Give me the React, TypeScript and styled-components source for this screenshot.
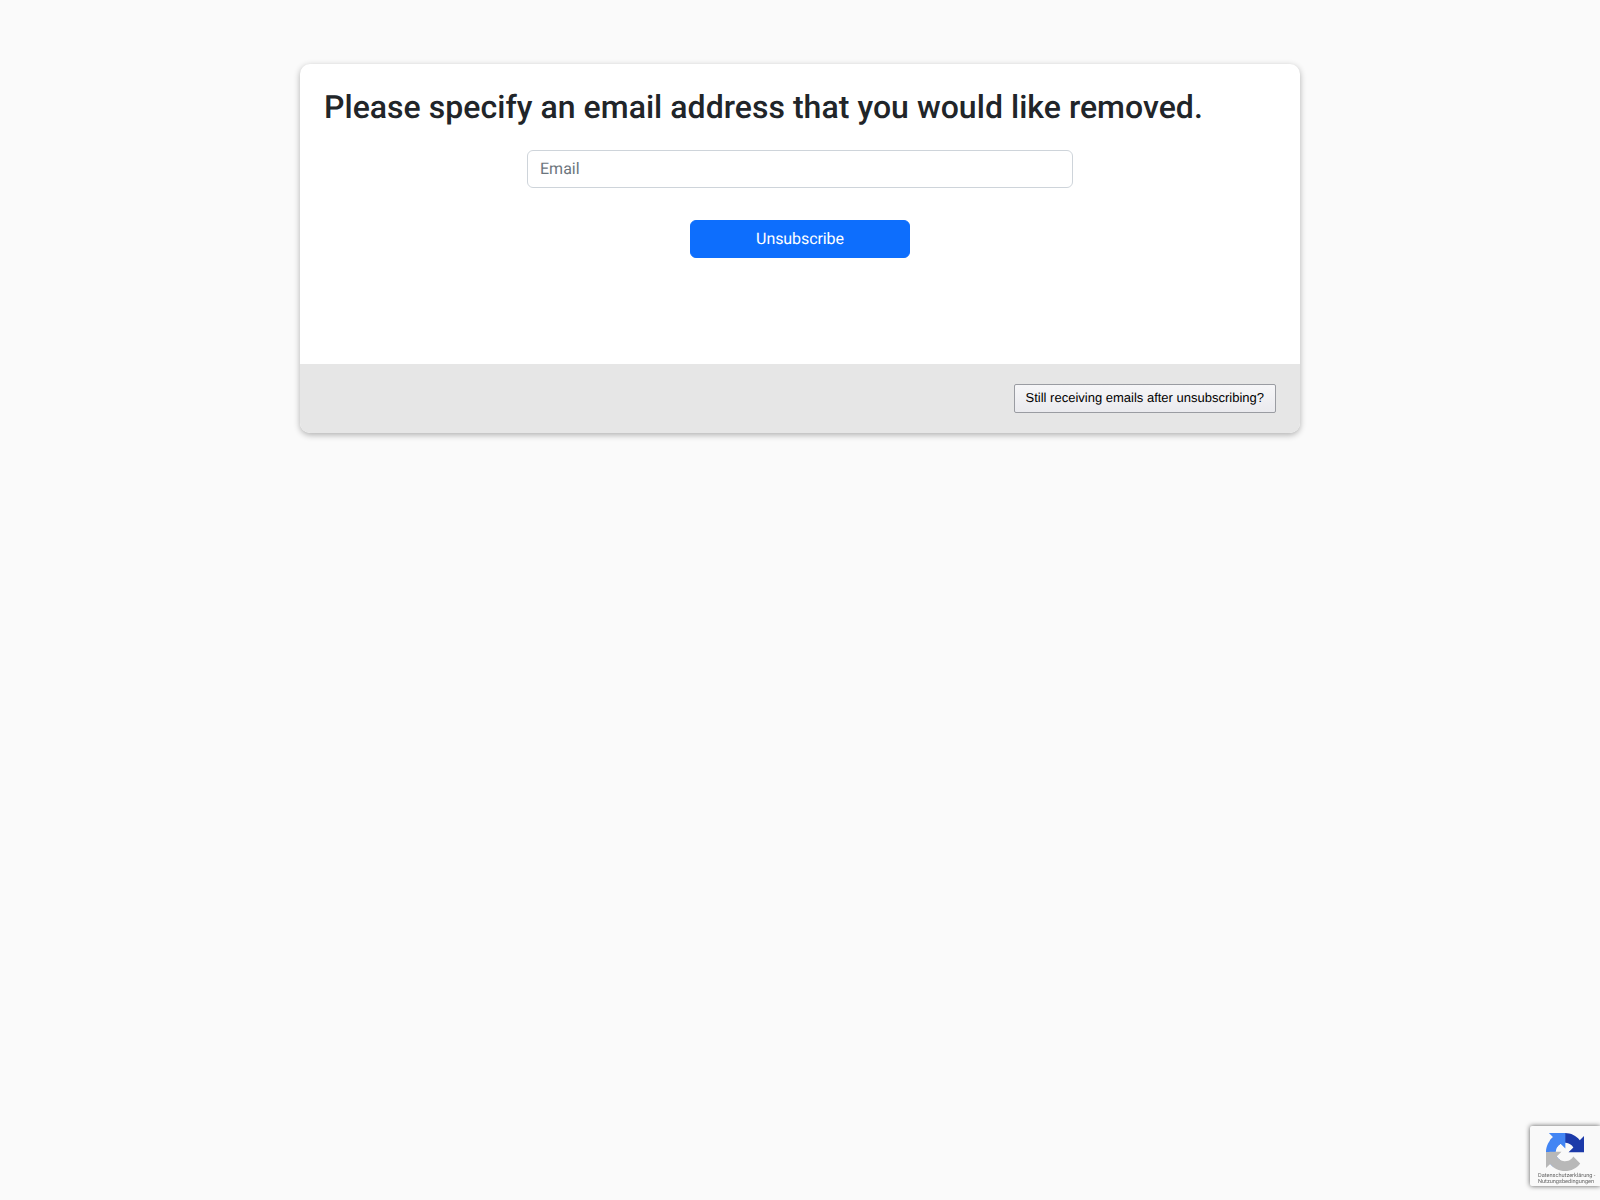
import React from "react";
import styled, { createGlobalStyle } from "styled-components";

const GlobalStyle = createGlobalStyle`
  html, body {
    margin: 0;
    padding: 0;
    min-height: 100%;
  }

  body {
    background: #fafafa;
    color: #212529;
    font-family: Roboto, "Liberation Sans", sans-serif;
    font-size: 16px;
    line-height: 1.5;
    text-rendering: geometricPrecision;
  }
`;

const Page = styled.main`
  min-height: 1200px;
  padding-top: 64px;
  box-sizing: border-box;
`;

const Card = styled.section`
  width: 1000px;
  margin: 0 auto;
  background: #fff;
  border-radius: 10px;
  overflow: hidden;
  box-shadow: 0 2px 6px rgba(0, 0, 0, 0.3);
`;

const CardBody = styled.form`
  height: 300px;
  box-sizing: border-box;
  padding: 24px;
  display: flex;
  flex-direction: column;
  align-items: center;
`;

const Heading = styled.h2`
  align-self: stretch;
  margin: 0 0 24px;
  font-size: 32px;
  font-weight: 500;
  letter-spacing: 0.035px;
  line-height: 38.4px;
  color: #212529;
`;

const EmailInput = styled.input`
  width: 546px;
  height: 38px;
  box-sizing: border-box;
  margin-bottom: 32px;
  padding: 5px 12px 7px;
  background: #fff;
  border: 1px solid #ced4da;
  border-radius: 6px;
  color: #212529;
  font-family: inherit;
  font-size: 16px;
  text-rendering: geometricPrecision;
  outline: none;

  &::placeholder {
    color: #6c757d;
    opacity: 1;
  }
`;

const SubmitButton = styled.button`
  width: 220px;
  height: 38px;
  padding: 6px 12px;
  background: #0d6efd;
  border: 1px solid #0d6efd;
  border-radius: 6px;
  color: #fff;
  font-family: inherit;
  font-size: 16px;
  letter-spacing: -0.08px;
  line-height: 24px;
  text-rendering: geometricPrecision;
`;

const CardFooter = styled.footer`
  display: flex;
  justify-content: flex-end;
  padding: 20px 24px;
  background: #e6e6e6;
`;

const HelpButton = styled.button`
  height: 29px;
  box-sizing: border-box;
  padding: 0 11px 2px;
  background: linear-gradient(#f6f6f8, #eaeaee);
  border: 1px solid #9a9ca2;
  border-radius: 2px;
  color: #000;
  font-family: "Liberation Sans", Arial, sans-serif;
  font-size: 13px;
  text-rendering: geometricPrecision;
`;

const RecaptchaBadge = styled.aside`
  position: fixed;
  right: 0;
  bottom: 14px;
  width: 70px;
  height: 60px;
  box-sizing: border-box;
  padding-top: 7px;
  background: #f9f9f9;
  border-radius: 2px 0 0 2px;
  box-shadow: 0 0 5px rgba(0, 0, 0, 0.65);
  overflow: hidden;
`;

const RecaptchaLogo = styled.svg`
  display: block;
  width: 38px;
  height: 38px;
  margin-left: 16px;
`;

const RecaptchaLinks = styled.div`
  position: absolute;
  left: 8px;
  bottom: 0;
  width: 62px;
  color: #666;
  font-family: Roboto, "Liberation Sans", sans-serif;
  font-size: 5.6px;
  line-height: 6.7px;
  white-space: nowrap;
`;

export default function App() {
  return (
    <>
      <GlobalStyle />
      <Page>
        <Card>
          <CardBody onSubmit={e => e.preventDefault()}>
            <Heading>Please specify an email address that you would like removed.</Heading>
            <EmailInput type="email" placeholder="Email" />
            <SubmitButton type="submit">Unsubscribe</SubmitButton>
          </CardBody>
          <CardFooter>
            <HelpButton type="button">Still receiving emails after unsubscribing?</HelpButton>
          </CardFooter>
        </Card>
      </Page>
      <RecaptchaBadge>
        <RecaptchaLogo viewBox="0 0 64 64" aria-hidden="true">
          <path
            d="M64 32l-.001-1.4V4.9l-7.1 7.1C51 4.7 42 0 32 0 21.5 0 12.2 5 6.4 12.8l11.6 11.7c1.1-2.1 2.7-3.9 4.7-5.2 2-1.6 4.9-2.9 9.3-2.9.5 0 .9.1 1.2.2 5.4.4 10.1 3.4 12.9 7.8l-8.2 8.2c10.4 0 22.1 0 27 0"
            fill="#1c3aa9"
          />
          <path
            d="M32 0l-1.4.001H4.9l7.1 7.1C4.7 13 0 22 0 32c0 10.5 5 19.8 12.8 25.6l11.7-11.6c-2.1-1.1-3.9-2.7-5.2-4.7-1.6-2-2.9-4.9-2.9-9.3 0-.5.1-.9.2-1.2.4-5.4 3.4-10.1 7.8-12.9l8.2 8.2c0-10.4 0-22.1 0-27"
            fill="#4285f4"
          />
          <path
            d="M0 32l.001 1.4V59.1l7.1-7.1C13 59.3 22 64 32 64c10.5 0 19.8-5 25.6-12.8L46 39.5c-1.1 2.1-2.7 3.9-4.7 5.2-2 1.6-4.9 2.9-9.3 2.9-.5 0-.9-.1-1.2-.2-5.4-.4-10.1-3.4-12.9-7.8l8.2-8.2C15.7 31.4 4 31.4 0 32"
            fill="#b8b8b8"
          />
        </RecaptchaLogo>
        <RecaptchaLinks>
          Datenschutzerklärung -<br />
          Nutzungsbedingungen
        </RecaptchaLinks>
      </RecaptchaBadge>
    </>
  );
}
